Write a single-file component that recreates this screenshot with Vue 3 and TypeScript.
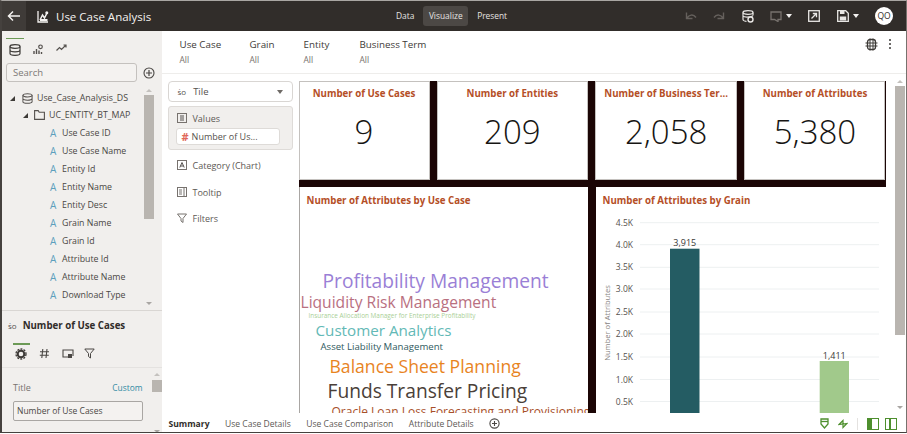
<script setup lang="ts">
const fields = [
  "Use Case ID", "Use Case Name", "Entity Id", "Entity Name", "Entity Desc",
  "Grain Name", "Grain Id", "Attribute Id", "Attribute Name", "Download Type",
];
const filters = [
  { label: "Use Case", width: 70 },
  { label: "Grain", width: 54 },
  { label: "Entity", width: 56 },
  { label: "Business Term", width: 90 },
];
const tiles = [
  { title: "Number of Use Cases", value: "9", width: 131 },
  { title: "Number of Entities", value: "209", width: 151 },
  { title: "Number of Business Ter...", value: "2,058", width: 142 },
  { title: "Number of Attributes", value: "5,380", width: 141 },
];
const words = [
  { text: "Profitability Management", size: 19.2, left: 23, height: 27, color: "#9a7fd6" },
  { text: "Liquidity Risk Management", size: 15.6, left: 1, height: 17, color: "#b9707f" },
  { text: "Insurance Allocation Manager for Enterprise Profitability", size: 6.4, left: 9, height: 9, color: "#a9cf96" },
  { text: "Customer Analytics", size: 15.2, left: 16, height: 21, color: "#63b9b6" },
  { text: "Asset Liability Management", size: 9.6, left: 21, height: 11, color: "#2f5a60" },
  { text: "Balance Sheet Planning", size: 17.6, left: 30, height: 29, color: "#e8841f" },
  { text: "Funds Transfer Pricing", size: 19.2, left: 28, height: 19, color: "#4a4038" },
  { text: "Oracle Loan Loss Forecasting and Provisioning", size: 12, left: 32, height: 23, color: "#a8502a" },
];
const ticks = [
  { label: "4.5K", y: 42.7 }, { label: "4.0K", y: 64.7 }, { label: "3.5K", y: 87.3 },
  { label: "3.0K", y: 109 }, { label: "2.5K", y: 132 }, { label: "2.0K", y: 154 },
  { label: "1.5K", y: 177 }, { label: "1.0K", y: 199.5 }, { label: "0.5K", y: 221.5 },
];
const tabs = ["Summary", "Use Case Details", "Use Case Comparison", "Attribute Details"];
</script>

<template>
  <div class="app">
    <header class="topbar">
      <button class="back" aria-label="Back">
        <svg width="14" height="12" viewBox="0 0 14 12"><path d="M13 6H2M6 1.500 1.500 6 6 10.500" fill="none" stroke="#f4f2f0" stroke-width="1.500"/></svg>
      </button>
      <svg class="logo" width="12" height="13" viewBox="0 0 12 13"><path d="M1 1v11h10" fill="none" stroke="#f4f2f0" stroke-width="1.300"/><path d="M3 10 5.500 5 7.500 8 10 3" fill="none" stroke="#f4f2f0" stroke-width="1.500"/><circle cx="9.800" cy="2.800" r="1.500" fill="#f4f2f0"/><rect x="3" y="9" width="7.500" height="2" fill="#f4f2f0"/></svg>
      <span class="title">Use Case Analysis</span>
      <nav class="modes">
        <span>Data</span>
        <span class="active">Visualize</span>
        <span>Present</span>
      </nav>
      <div class="actions">
        <svg class="undo" width="12" height="10" viewBox="0 0 12 10"><path d="M1.500 1.500v6h6M2 7c2-3 6-4.500 9-.5" fill="none" stroke="#65605c" stroke-width="1.400"/></svg>
        <svg class="redo" width="12" height="10" viewBox="0 0 12 10"><path d="M10.500 1.500v6h-6M10 7C8 4 4 2.500 1 6.500" fill="none" stroke="#65605c" stroke-width="1.400"/></svg>
        <svg class="dbsave" width="12" height="13" viewBox="0 0 12 13"><ellipse cx="6" cy="2.500" rx="5" ry="1.800" fill="none" stroke="#e8e6e4" stroke-width="1.200"/><path d="M1 2.500v7c0 1 2 1.800 3.500 1.800M11 2.500v3M1 6c1 1.300 6 1.500 10 0" fill="none" stroke="#e8e6e4" stroke-width="1.200"/><circle cx="8.500" cy="9.500" r="2.500" fill="none" stroke="#e8e6e4" stroke-width="1.400"/></svg>
        <span class="withcaret comment">
          <svg width="12" height="11" viewBox="0 0 12 11"><path d="M1 1h10v7.500H8v2L4.500 8.500H1z" fill="none" stroke="#77726e" stroke-width="1.300"/></svg>
          <i class="caret"></i>
        </span>
        <svg class="share" width="12" height="12" viewBox="0 0 12 12"><rect x=".7" y=".7" width="10.600" height="10.600" fill="none" stroke="#e8e6e4" stroke-width="1.300"/><path d="M3.500 8.500 8 4M4.800 3.500H8.500V7.200" fill="none" stroke="#e8e6e4" stroke-width="1.300"/></svg>
        <span class="withcaret save">
          <svg width="12" height="12" viewBox="0 0 12 12"><path d="M.7.700h8l2.600 2.600v8H.7z" fill="none" stroke="#e8e6e4" stroke-width="1.300"/><rect x="3" y="1" width="4.500" height="3" fill="#e8e6e4"/><rect x="2.800" y="6.500" width="6.400" height="4" fill="#e8e6e4"/></svg>
          <i class="caret"></i>
        </span>
        <span class="avatar">QO</span>
      </div>
    </header>

    <div class="body">
      <aside class="left">
        <div class="paneltabs">
          <span class="ptab on">
            <svg width="12" height="12" viewBox="0 0 12 12"><ellipse cx="6" cy="2.500" rx="5" ry="1.800" fill="none" stroke="#3d3a37" stroke-width="1.200"/><path d="M1 2.500v7c0 1 2.200 1.800 5 1.800s5-.8 5-1.800v-7M1 6c0 1 2.200 1.800 5 1.800S11 7 11 6" fill="none" stroke="#3d3a37" stroke-width="1.200"/></svg>
          </span>
          <span class="ptab">
            <svg width="11" height="11" viewBox="0 0 11 11"><path d="M1 10V7M3.500 10V5M6 10V6.500M8.500 10V8" stroke="#55514e" stroke-width="1.400"/><circle cx="7.500" cy="2.800" r="1.800" fill="none" stroke="#55514e" stroke-width="1.200"/></svg>
          </span>
          <span class="ptab">
            <svg width="11" height="8" viewBox="0 0 11 8"><path d="M.5 6.500 3.500 3.500 5.500 5.500 10 1M7.500 1H10V3.500" fill="none" stroke="#55514e" stroke-width="1.200"/></svg>
          </span>
        </div>
        <div class="searchrow">
          <div class="search">Search</div>
          <svg width="12" height="12" viewBox="0 0 12 12"><circle cx="6" cy="6" r="5" fill="none" stroke="#4a4744" stroke-width="1.100"/><path d="M6 3v6M3 6h6" stroke="#4a4744" stroke-width="1.200"/></svg>
        </div>
        <div class="tree">
          <div class="treelist">
            <div class="node ds">
              <i class="tri"></i>
              <svg width="11" height="11" viewBox="0 0 12 12"><ellipse cx="6" cy="2.500" rx="5" ry="1.800" fill="none" stroke="#55514e" stroke-width="1.100"/><path d="M1 2.500v7c0 1 2.200 1.800 5 1.800s5-.8 5-1.800v-7M1 6c0 1 2.200 1.800 5 1.800S11 7 11 6" fill="none" stroke="#55514e" stroke-width="1.100"/></svg>
              <span>Use_Case_Analysis_DS</span>
            </div>
            <div class="node folder">
              <i class="tri"></i>
              <svg width="11" height="10" viewBox="0 0 11 10"><path d="M.6 9.400V.6h3.600l1 1.600h5.200v7.200z" fill="none" stroke="#55514e" stroke-width="1.100"/></svg>
              <span>UC_ENTITY_BT_MAP</span>
            </div>
            <div v-for="f in fields" :key="f" class="node field">
              <b>A</b><span>{{ f }}</span>
            </div>
          </div>
          <div class="scroll treescroll">
            <i class="up"></i>
            <i class="thumb"></i>
            <i class="down"></i>
          </div>
        </div>
        <div class="props">
          <div class="propshead"><span class="so">ṡo</span><strong>Number of Use Cases</strong></div>
          <div class="propstabs">
            <svg class="on" width="12" height="12" viewBox="0 0 12 12"><circle cx="6" cy="6" r="3.300" fill="none" stroke="#3d3a37" stroke-width="2"/><circle cx="6" cy="6" r="5" fill="none" stroke="#3d3a37" stroke-width="1.300" stroke-dasharray="2 1.200"/></svg>
            <svg width="11" height="11" viewBox="0 0 11 11"><path d="M3.800 1 2.800 10M8 1 7 10M1 3.800h9M.8 7.200h9" stroke="#4a4744" stroke-width="1.100"/></svg>
            <svg width="12" height="10" viewBox="0 0 12 10"><path d="M6 8H1V1h10v6" fill="none" stroke="#4a4744" stroke-width="1.100"/><path d="M6 5h4v4H6z" fill="#4a4744"/></svg>
            <svg class="last" width="11" height="11" viewBox="0 0 11 11"><path d="M.8 1h9.400L6.500 5.500V10L4.500 8.500v-3z" fill="none" stroke="#4a4744" stroke-width="1"/></svg>
          </div>
          <div class="propsbody">
            <div class="propsform">
              <div class="titlerow"><span>Title</span><a>Custom</a></div>
              <div class="titleinput">Number of Use Cases</div>
            </div>
            <div class="scroll propscroll">
              <i class="up"></i>
              <i class="thumb"></i>
              <i class="down"></i>
            </div>
          </div>
        </div>
      </aside>

      <main class="main">
        <div class="filters">
          <div v-for="f in filters" :key="f.label" class="filter" :style="{ width: f.width + 'px' }">
            <span>{{ f.label }}</span>
            <small>All</small>
          </div>
          <div class="filtericons">
            <svg width="13" height="13" viewBox="0 0 13 13"><rect x="2.500" y="1.500" width="8" height="10" rx="2.500" fill="none" stroke="#3d3a37" stroke-width="1.300"/><path d="M5 .5v12M8 .5v12M.5 5h12M.5 8h12" stroke="#3d3a37" stroke-width="1"/></svg>
            <span class="dots"><i></i><i></i><i></i></span>
          </div>
        </div>

        <div class="workspace">
          <section class="grammar">
            <div class="select">
              <span class="so">ṡo</span><span>Tile</span><i class="selcaret"></i>
            </div>
            <div class="values">
              <div class="gitem">
                <svg width="10" height="10" viewBox="0 0 10 10"><rect x=".5" y=".5" width="9" height="9" fill="none" stroke="#77726e"/><path d="M3 3h4M3 5h4M3 7h4" stroke="#55514e"/></svg>
                <span>Values</span>
              </div>
              <div class="pill"><em>#</em><span>Number of Us...</span></div>
            </div>
            <div class="gitem cat">
              <svg width="10" height="10" viewBox="0 0 10 10"><rect x=".5" y=".5" width="9" height="9" fill="none" stroke="#77726e"/><path d="M2.800 7.500 5 2.500l2.200 5M3.600 6h2.800" fill="none" stroke="#55514e"/></svg>
              <span>Category (Chart)</span>
            </div>
            <div class="gitem tip">
              <svg width="10" height="10" viewBox="0 0 10 10"><rect x=".5" y=".5" width="9" height="9" fill="none" stroke="#77726e"/><path d="M2 3h3M2 5h3M2 7h3M7 1v8" stroke="#77726e"/></svg>
              <span>Tooltip</span>
            </div>
            <div class="gitem filt">
              <svg width="10" height="10" viewBox="0 0 10 10"><path d="M.5 1h9L6 5.500v4L4 8V5.500z" fill="none" stroke="#77726e"/></svg>
              <span>Filters</span>
            </div>
          </section>

          <section class="canvas">
            <div class="tilerow">
              <article v-for="t in tiles" :key="t.title" class="tile" :style="{ width: t.width + 'px' }">
                <h3>{{ t.title }}</h3>
                <div class="num">{{ t.value }}</div>
              </article>
            </div>
            <div class="chartrow">
              <article class="panel cloud">
                <h3>Number of Attributes by Use Case</h3>
                <div class="words">
                  <div v-for="w in words" :key="w.text" class="word" :style="{ fontSize: w.size + 'px', marginLeft: w.left + 'px', height: w.height + 'px', lineHeight: w.height + 'px', color: w.color }">{{ w.text }}</div>
                </div>
              </article>
              <article class="panel bars">
                <h3>Number of Attributes by Grain</h3>
                <svg class="chart" width="290" height="233" viewBox="0 0 290 233">
                  <text class="axis" transform="translate(14 143) rotate(-90)" text-anchor="middle">Number of Attributes</text>
                  <g v-for="t in ticks" :key="t.label">
                    <line x1="44" x2="283" :y1="t.y" :y2="t.y" stroke="#edf0f1" />
                    <text class="tick" x="37" :y="t.y + 3" text-anchor="end">{{ t.label }}</text>
                  </g>
                  <rect x="74" y="68.700" width="29.500" height="170" fill="#245c63" />
                  <text class="val" x="88.800" y="66" text-anchor="middle">3,915</text>
                  <rect x="223.700" y="181" width="29.300" height="60" fill="#a1c98b" />
                  <text class="val" x="238.300" y="178.500" text-anchor="middle">1,411</text>
                </svg>
              </article>
            </div>
          </section>

          <div class="scroll mainscroll">
            <i class="up"></i>
            <i class="thumb"></i>
            <i class="down"></i>
          </div>
        </div>

        <footer class="tabs">
          <span v-for="(t, i) in tabs" :key="t" class="tab" :class="{ cur: i === 0 }">{{ t }}</span>
          <svg class="addtab" width="11" height="11" viewBox="0 0 11 11"><circle cx="5.500" cy="5.500" r="4.600" fill="none" stroke="#4a4744" stroke-width="1.100"/><path d="M5.500 3v5M3 5.500h5" stroke="#4a4744" stroke-width="1.100"/></svg>
          <div class="tabicons">
            <svg width="9" height="11" viewBox="0 0 9 11"><path d="M1 1h7v5L4.500 10 1 6z" fill="none" stroke="#4e8f2e" stroke-width="1.300"/><path d="M1 3.500h7" stroke="#4e8f2e" stroke-width="1.300"/></svg>
            <svg width="10" height="10" viewBox="0 0 10 10"><path d="M1 5.500 5 1.500 5 5 9 4.500 5 8.500 5 5z" fill="none" stroke="#4e8f2e" stroke-width="1.200"/></svg>
            <i class="sep"></i>
            <span class="lay lay-l"></span>
            <span class="lay lay-r"></span>
          </div>
        </footer>
      </main>
    </div>
  </div>
</template>

<style scoped>
.app {
  box-sizing: border-box;
  width: 907px;
  height: 432.500px;
  display: flex;
  flex-direction: column;
  overflow: hidden;
  background: #fff;
  color: #3d3a37;
  font-family: "Open Sans", "Noto Sans", sans-serif;
  font-size: 9.500px;
  border-top: 1px solid #a9a6a3;
  border-left: 2px solid #45413e;
  border-right: 1px solid #77726e;
  border-bottom: 1.500px solid #45413e;
}
.topbar {
  flex: none;
  height: 30px;
  display: flex;
  align-items: center;
  background: #312d2a;
  color: #f4f2f0;
  position: relative;
}
.back {
  width: 24px;
  height: 30px;
  padding: 0;
  border: 0;
  display: flex;
  align-items: center;
  justify-content: center;
  background: #3f3b38;
}
.logo { margin-left: 11px; }
.title { margin-left: 7px; font-size: 11.500px; }
.modes {
  position: absolute;
  left: 385px;
  top: 5px;
  display: flex;
  align-items: center;
  height: 20px;
  font-size: 8.400px;
  color: #e5e3e1;
}
.modes span { padding: 0 9px; height: 20px; line-height: 20px; }
.modes .active { background: #4c4845; border-radius: 3px; padding: 0 5.500px; }
.actions {
  margin-left: auto;
  display: flex;
  align-items: center;
  padding-right: 13px;
}
.redo { margin-left: 16px; }
.dbsave { margin-left: 17px; }
.comment { margin-left: 16px; }
.share { margin-left: 16px; }
.save { margin-left: 17px; }
.withcaret { display: flex; align-items: center; gap: 4px; }
.caret {
  width: 0;
  height: 0;
  border-left: 3px solid transparent;
  border-right: 3px solid transparent;
  border-top: 4px solid #f4f2f0;
}
.avatar {
  margin-left: 16px;
  width: 18px;
  height: 18px;
  border-radius: 50%;
  background: #fff;
  color: #312d2a;
  font-size: 8.500px;
  line-height: 18px;
  text-align: center;
}

.body { flex: 1; min-height: 0; display: flex; }
.left {
  flex: none;
  width: 159.500px;
  display: flex;
  flex-direction: column;
  background: #f1efed;
}
.paneltabs {
  flex: none;
  height: 32px;
  display: flex;
  padding: 7px 0 0 4px;
  box-sizing: border-box;
}
.ptab {
  width: 18px;
  margin-right: 5px;
  display: flex;
  justify-content: center;
  padding-top: 5px;
  border-top: 1.500px solid transparent;
  box-sizing: border-box;
}
.ptab.on { border-top-color: #6c9a56; }
.searchrow {
  flex: none;
  display: flex;
  align-items: center;
  gap: 6px;
  padding-left: 4px;
}
.search {
  box-sizing: border-box;
  width: 131px;
  height: 19px;
  padding-left: 6px;
  border: 1px solid #c4c1be;
  border-radius: 3px;
  background: #f4f2f0;
  color: #7c7875;
  line-height: 17px;
}
.tree { flex: 1; min-height: 0; display: flex; margin-top: 6px; }
.treelist { flex: 1; padding-top: 1.500px; overflow: hidden; }
.node {
  height: 18.100px;
  display: flex;
  align-items: center;
  white-space: nowrap;
  color: #4a4744;
  font-size: 8.800px;
}
.ds, .folder { height: 17px; }
.tri {
  width: 0;
  height: 0;
  border-bottom: 5px solid #3d3a37;
  border-left: 5px solid transparent;
}
.ds { padding-left: 8px; }
.ds svg { margin: 0 4px 0 7px; }
.folder { padding-left: 21px; }
.folder svg { margin: 0 4px 0 6px; }
.field { padding-left: 48px; }
.field b {
  width: 12px;
  color: #5c9fbd;
  font-size: 10px;
  font-weight: 400;
}
.scroll {
  position: relative;
  flex: none;
  width: 10px;
}
.scroll i { display: block; }
.scroll .up, .scroll .down {
  position: absolute;
  left: 2px;
  width: 0;
  height: 0;
  border-left: 3px solid transparent;
  border-right: 3px solid transparent;
}
.scroll .up { border-bottom: 3px solid #c4c1be; }
.scroll .down { border-top: 3px solid #a9a6a3; }
.scroll .thumb { position: absolute; left: 0; width: 10px; background: #b9b5b0; }
.treescroll { margin: 0 7.500px 0 0; }
.treescroll .up { top: 1px; }
.treescroll .thumb { top: 7px; height: 124px; }
.treescroll .down { bottom: 5px; }
.props {
  flex: none;
  height: 122px;
  box-sizing: border-box;
  display: flex;
  flex-direction: column;
  border-top: 1px solid #d9d6d3;
}
.propshead {
  flex: none;
  height: 28px;
  display: flex;
  align-items: center;
  gap: 6px;
  padding: 2px 0 0 6px;
  box-sizing: border-box;
}
.propshead strong { font-size: 9.700px; color: #312d2a; }
.so { font-size: 8px; color: #55514e; }
.propstabs {
  flex: none;
  height: 29px;
  display: flex;
  align-items: center;
  gap: 12px;
  padding: 2px 0 0 13px;
  box-sizing: border-box;
  border-bottom: 1px solid #e4e2e0;
  position: relative;
}
.propstabs::before {
  content: "";
  position: absolute;
  left: 11px;
  top: 4px;
  width: 17px;
  height: 2px;
  background: #6c9a56;
}
.propstabs .last { margin-left: -2px; }
.propsbody { flex: 1; min-height: 0; display: flex; }
.propsform { flex: 1; padding: 12px 9px 0 11px; }
.titlerow { display: flex; justify-content: space-between; align-items: center; height: 16px; }
.titlerow span { color: #77726e; font-size: 9px; }
.titlerow a { color: #2f8aa3; font-size: 8.400px; }
.titleinput {
  box-sizing: border-box;
  margin-top: 5px;
  height: 20px;
  padding-left: 3px;
  border: 1px solid #a9a6a3;
  border-radius: 2px;
  line-height: 18px;
  background: #f4f2f0;
  color: #4a4744;
  font-size: 8.500px;
}
.propscroll .up { top: 5px; }
.propscroll .thumb { top: 12px; height: 12px; }
.propscroll .down { top: 62px; }

.main { flex: 1; min-width: 0; display: flex; flex-direction: column; }
.filters {
  flex: none;
  height: 43px;
  box-sizing: border-box;
  display: flex;
  padding: 7px 0 0 18px;
  border-bottom: 1px solid #eeedeb;
}
.filter { display: flex; flex-direction: column; }
.filter span { font-size: 9.800px; color: #3d3a37; line-height: 14px; }
.filter small { font-size: 8.500px; color: #77726e; margin-top: 1.500px; line-height: 12px; }
.filtericons {
  margin-left: auto;
  display: flex;
  gap: 11px;
  padding: 0 15px 0 0;
  height: 13px;
}
.dots { display: flex; flex-direction: column; gap: 2px; width: 2px; padding-top: 1px; }
.dots i { width: 2px; height: 2px; background: #3d3a37; border-radius: 50%; }

.workspace { flex: 1; min-height: 0; display: flex; }
.grammar {
  flex: none;
  width: 137px;
  box-sizing: border-box;
  padding: 7px 5px 0 6px;
}
.select {
  box-sizing: border-box;
  height: 21px;
  width: 125px;
  display: flex;
  align-items: center;
  gap: 7px;
  padding: 0 9px;
  border: 1px solid #d9d6d3;
  border-radius: 4px;
  color: #55514e;
}
.selcaret {
  margin-left: auto;
  width: 0;
  height: 0;
  border-left: 3.500px solid transparent;
  border-right: 3.500px solid transparent;
  border-top: 4px solid #6e6a66;
}
.values {
  box-sizing: border-box;
  width: 125px;
  height: 44px;
  margin-top: 4px;
  padding: 5px 7px;
  background: #f1efed;
  border: 1px solid #dedbd8;
  border-radius: 3px;
}
.gitem {
  display: flex;
  align-items: center;
  gap: 6px;
  height: 12px;
  margin-left: 1px;
  color: #5d5955;
  font-size: 9px;
}
.cat { margin: 9px 0 0 9px; }
.tip { margin: 15px 0 0 9px; }
.filt { margin: 14px 0 0 9px; }
.pill {
  box-sizing: border-box;
  width: 104px;
  height: 17px;
  margin-top: 4px;
  display: flex;
  align-items: center;
  gap: 3px;
  padding-left: 5px;
  background: #fff;
  border: 1px solid #dedbd8;
  border-radius: 3px;
  color: #55514e;
  font-size: 9px;
}
.pill em { color: #e0685a; font-style: normal; font-size: 11px; font-weight: 700; }

.canvas {
  flex: none;
  width: 587px;
  display: flex;
  flex-direction: column;
  overflow: hidden;
  background: #1b0505;
  margin-top: 7px;
}
.tilerow { flex: none; height: 99px; display: flex; justify-content: space-between; }
.tile {
  box-sizing: border-box;
  background: #fff;
  border: 1px solid #c4c1be;
  text-align: center;
}
h3 {
  margin: 0;
  color: #b54f27;
  font-size: 9.700px;
  font-weight: 700;
  white-space: nowrap;
}
.tile h3 { padding-top: 5px; line-height: 14px; }
.num { margin-top: 10px; font-size: 33px; font-weight: 300; line-height: 42px; color: #161513; }
.chartrow { flex: 1; min-height: 0; margin-top: 7px; display: flex; justify-content: space-between; }
.panel { background: #fff; overflow: hidden; position: relative; }
.panel h3 { padding: 7px 0 0 7px; line-height: 13px; }
.cloud { width: 289px; border-left: 1px solid #a9a6a3; box-sizing: border-box; }
.words { margin-top: 60px; white-space: nowrap; }
.bars { width: 290px; }
.chart { display: block; margin-top: -27px; }
.axis { font-size: 7.600px; fill: #8a8683; }
.tick { font-size: 8.500px; fill: #55514e; }
.val { font-size: 9px; fill: #3d3a37; }
.mainscroll { flex: 1; width: auto; }
.mainscroll .up { left: 11px; top: 6px; }
.mainscroll .thumb { left: 9px; top: 12px; height: 249px; }
.mainscroll .down { left: 11px; top: 332px; }

.tabs {
  flex: none;
  height: 19px;
  display: flex;
  align-items: center;
  padding: 3px 0 0 7px;
  box-sizing: border-box;
  font-size: 8.550px;
  color: #5d5955;
  background: #fff;
}
.tab { margin-right: 15.500px; white-space: nowrap; }
.tab.cur { font-weight: 700; color: #312d2a; }
.addtab { margin-left: 0; }
.tabicons {
  margin-left: auto;
  display: flex;
  align-items: center;
  gap: 9px;
  padding-right: 9px;
}
.sep { width: 1px; height: 12px; background: #e4e2e0; margin-left: 0; }
.lay { width: 12px; height: 12px; box-sizing: border-box; border: 1.500px solid #4e8f2e; margin-left: -1px; }
.lay-l { border-left-width: 5px; margin-left: 0; margin-right: -3px; }
.lay-r { position: relative; margin-left: 0; }
.lay-r::after { content: ""; position: absolute; left: 3px; top: 0; bottom: 0; width: 1.500px; background: #4e8f2e; }
</style>
